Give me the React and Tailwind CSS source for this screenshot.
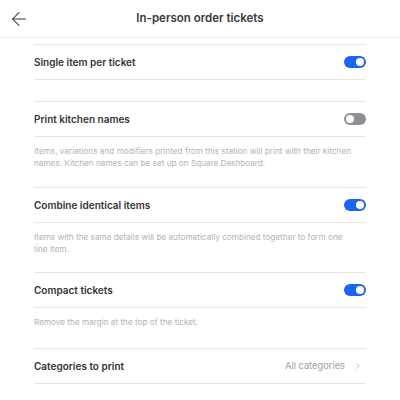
import { ArrowLeft, ChevronRight } from 'lucide-react';

const Toggle = ({ on }) => (
  <div className={`w-[22px] h-[12px] rounded-full flex items-center px-[2px] ${on ? 'bg-[#1a66f2] justify-end' : 'bg-[#8c8f94] justify-start'}`}>
    <div className="w-[8px] h-[8px] rounded-full bg-white" />
  </div>
);

const Row = ({ label, children }) => (
  <div className="h-[36px] border-y border-[#e6e6e6] flex items-center justify-between">
    <span className="text-[10px] font-semibold text-[#333]">{label}</span>
    {children}
  </div>
);

const Desc = ({ h, children }) => (
  <div className={`pt-[8px] ${h}`}>
    <p className="w-[320px] text-[8.2px] leading-[12px] text-[#b3b3b3]">{children}</p>
  </div>
);

export default function App() {
  return (
    <div className="w-[400px] h-[400px] bg-white overflow-hidden" style={{ fontFamily: 'Inter, "Noto Sans", sans-serif' }}>
      <div className="h-[38px] border-b border-[#ececec] relative flex items-center justify-center">
        <ArrowLeft className="absolute left-[8px] top-[8px] w-[22px] h-[22px] text-[#333]" strokeWidth={1.1} />
        <span className="text-[11.5px] font-semibold text-[#3a3a3a]">In-person order tickets</span>
      </div>

      <div className="px-[34px] pt-[6px]">
        <Row label="Single item per ticket"><Toggle on /></Row>
        <div className="h-[21px]" />

        <Row label="Print kitchen names"><Toggle /></Row>
        <Desc h="h-[50px]">
          Items, variations and modifiers printed from this station will print with their kitchen names. Kitchen names can be set up on Square Dashboard.
        </Desc>

        <Row label="Combine identical items"><Toggle on /></Row>
        <Desc h="h-[49px]">
          Items with the same details will be automatically combined together to form one line item.
        </Desc>

        <Row label="Compact tickets"><Toggle on /></Row>
        <Desc h="h-[40px]">Remove the margin at the top of the ticket.</Desc>

        <Row label="Categories to print">
          <div className="flex items-center gap-[8px] pr-[3px]">
            <span className="text-[9.3px] text-[#a0a0a0]">All categories</span>
            <ChevronRight className="w-[10px] h-[10px] text-[#a0a0a0]" strokeWidth={1.5} />
          </div>
        </Row>
      </div>
    </div>
  );
}
